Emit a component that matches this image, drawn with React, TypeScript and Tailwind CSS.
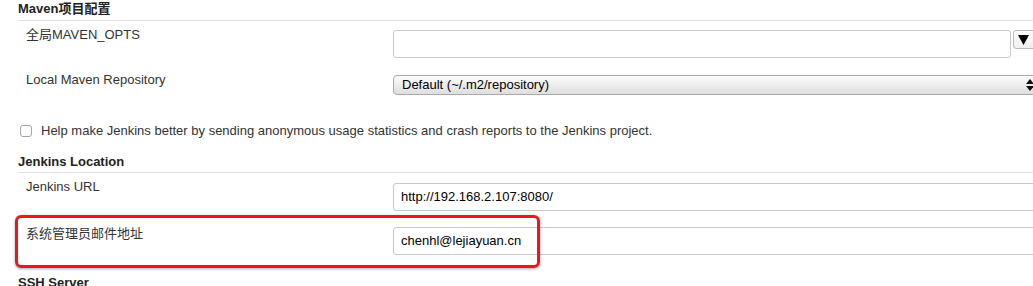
const font = "font-['Liberation_Sans','Noto_Sans_CJK_SC',sans-serif]";

function SectionHeading({ title, className = "" }: { title: string; className?: string }) {
  return (
    <div
      className={`ml-[18px] border-b border-[#e1e1e1] font-bold text-[13px] leading-[18px] text-[#222] ${className}`}
    >
      {title}
    </div>
  );
}

function TextBox({ value = "", width }: { value?: string; width: string }) {
  return (
    <div
      className={`${width} h-[28px] shrink-0 rounded-[3px] border border-[#c8c8c8] bg-white pl-[7px] text-[13px] leading-[26px] text-black`}
    >
      {value}
    </div>
  );
}

export default function App() {
  return (
    <div className={`w-[1033px] h-[286px] overflow-hidden bg-white text-[13px] text-[#333] ${font}`}>
      {/* Maven */}
      <SectionHeading title="Maven项目配置" className="h-[21px]" />

      <div className="flex h-[45px]">
        <div className="w-[393px] shrink-0 pl-[26px] pt-[6px] leading-[16px]">全局MAVEN_OPTS</div>
        <div className="flex items-start gap-[2px] pt-[9px]">
          <TextBox width="w-[618px]" />
          <div className="flex h-[19px] w-[26px] shrink-0 items-center rounded-[3px] border border-[#bbb] bg-gradient-to-b from-white to-[#eee] pl-[4px]">
            <svg width="11" height="10" viewBox="0 0 11 10">
              <path d="M0 0 H11 L5.5 10 Z" fill="#000" />
            </svg>
          </div>
        </div>
      </div>

      <div className="flex h-[45px]">
        <div className="w-[393px] shrink-0 pl-[26px] pt-[6px] leading-[16px]">Local Maven Repository</div>
        <div className="pt-[9px]">
          <div className="flex h-[20px] w-[646px] items-center justify-between rounded-[4px] border border-[#aaa] bg-gradient-to-b from-[#fdfdfd] to-[#dedede] pl-[8px] pr-[4px] text-[13px] text-black">
            <span>Default (~/.m2/repository)</span>
            <svg width="8" height="12" viewBox="0 0 8 12">
              <path d="M4 0 L8 5 H0 Z" fill="#111" />
              <path d="M0 7 H8 L4 12 Z" fill="#111" />
            </svg>
          </div>
        </div>
      </div>

      {/* usage stats */}
      <div className="flex h-[40px] items-center pl-[20px]">
        <input
          type="checkbox"
          className="h-[12px] w-[12px] shrink-0 appearance-none rounded-[3px] border border-[#a5a5a5] bg-white"
        />
        <span className="ml-[9px] leading-[16px]">
          Help make Jenkins better by sending anonymous usage statistics and crash reports to the Jenkins project.
        </span>
      </div>

      {/* Jenkins Location */}
      <SectionHeading title="Jenkins Location" className="h-[22px] pt-[2px]" />

      <div className="flex h-[45px]">
        <div className="w-[393px] shrink-0 pl-[26px] pt-[6px] leading-[16px]">Jenkins URL</div>
        <div className="pt-[10px]">
          <TextBox width="w-[660px]" value="http://192.168.2.107:8080/" />
        </div>
      </div>

      <div className="relative flex h-[56px]">
        <div className="w-[393px] shrink-0 pl-[26px] pt-[8px] leading-[16px]">系统管理员邮件地址</div>
        <div className="pt-[9px]">
          <TextBox width="w-[660px]" value="chenhl@lejiayuan.cn" />
        </div>
        {/* annotation */}
        <div className="pointer-events-none absolute left-[15px] top-[-3px] h-[53px] w-[525px] rounded-[6px] border-[3px] border-[#f0141c] shadow-[0_1px_3px_rgba(0,0,0,0.35)]" />
      </div>

      <SectionHeading title="SSH Server" className="h-[20px]" />
    </div>
  );
}
